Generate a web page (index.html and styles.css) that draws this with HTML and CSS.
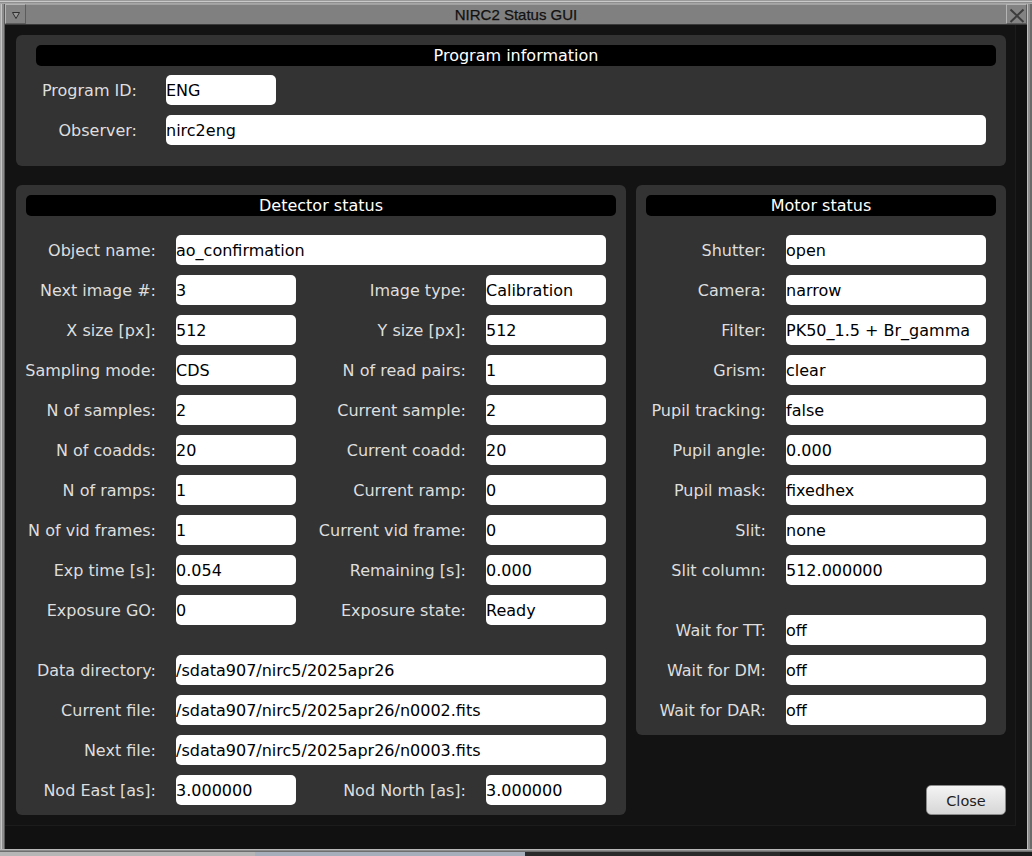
FILE: index.html
```html
<!DOCTYPE html>
<html>
<head>
<meta charset="utf-8">
<title>NIRC2 Status GUI</title>
<link rel="stylesheet" href="styles.css">
</head>
<body>
<div class="window">
  <div class="edge-top"></div>
  <div class="mid">
    <div class="side side-left"></div>
    <div class="main">
      <div class="titlebar">
        <div class="tb-btn">
          <svg width="21" height="21" viewBox="0 0 21 21"><polygon points="7.5,8.5 14.5,8.5 11,14.5" fill="#9a9a9a" stroke="#2e2e2e" stroke-width="1"/></svg>
        </div>
        <div class="title">NIRC2 Status GUI</div>
        <div class="tb-btn">
          <svg width="21" height="21" viewBox="0 0 21 21"><path d="M4.5 5.5 L17.5 18 M17.5 5.5 L4.5 18" stroke="#3c3c3c" stroke-width="2" fill="none"/></svg>
        </div>
      </div>
      <div class="client">
        <div class="app">
          <section class="panel program">
            <div class="panel-head">Program information</div>
            <div class="grid program-grid">
              <div class="lbl">Program ID:</div><div class="fld short">ENG</div>
              <div class="lbl">Observer:</div><div class="fld">nirc2eng</div>
            </div>
          </section>
          <div class="lower">
            <section class="panel detector">
              <div class="panel-head">Detector status</div>
              <div class="grid detector-grid">
                <div class="lbl">Object name:</div><div class="fld span-rest">ao_confirmation</div>
                <div class="lbl">Next image #:</div><div class="fld">3</div>
                <div class="lbl">Image type:</div><div class="fld">Calibration</div>
                <div class="lbl">X size [px]:</div><div class="fld">512</div>
                <div class="lbl">Y size [px]:</div><div class="fld">512</div>
                <div class="lbl">Sampling mode:</div><div class="fld">CDS</div>
                <div class="lbl">N of read pairs:</div><div class="fld">1</div>
                <div class="lbl">N of samples:</div><div class="fld">2</div>
                <div class="lbl">Current sample:</div><div class="fld">2</div>
                <div class="lbl">N of coadds:</div><div class="fld">20</div>
                <div class="lbl">Current coadd:</div><div class="fld">20</div>
                <div class="lbl">N of ramps:</div><div class="fld">1</div>
                <div class="lbl">Current ramp:</div><div class="fld">0</div>
                <div class="lbl">N of vid frames:</div><div class="fld">1</div>
                <div class="lbl">Current vid frame:</div><div class="fld">0</div>
                <div class="lbl">Exp time [s]:</div><div class="fld">0.054</div>
                <div class="lbl">Remaining [s]:</div><div class="fld">0.000</div>
                <div class="lbl">Exposure GO:</div><div class="fld">0</div>
                <div class="lbl">Exposure state:</div><div class="fld">Ready</div>
                <div class="spacer"></div>
                <div class="lbl">Data directory:</div><div class="fld span-rest">/sdata907/nirc5/2025apr26</div>
                <div class="lbl">Current file:</div><div class="fld span-rest">/sdata907/nirc5/2025apr26/n0002.fits</div>
                <div class="lbl">Next file:</div><div class="fld span-rest">/sdata907/nirc5/2025apr26/n0003.fits</div>
                <div class="lbl">Nod East [as]:</div><div class="fld">3.000000</div>
                <div class="lbl">Nod North [as]:</div><div class="fld">3.000000</div>
              </div>
            </section>
            <div class="right-col">
              <section class="panel motor">
                <div class="panel-head">Motor status</div>
                <div class="grid motor-grid">
                  <div class="lbl">Shutter:</div><div class="fld">open</div>
                  <div class="lbl">Camera:</div><div class="fld">narrow</div>
                  <div class="lbl">Filter:</div><div class="fld">PK50_1.5 + Br_gamma</div>
                  <div class="lbl">Grism:</div><div class="fld">clear</div>
                  <div class="lbl">Pupil tracking:</div><div class="fld">false</div>
                  <div class="lbl">Pupil angle:</div><div class="fld">0.000</div>
                  <div class="lbl">Pupil mask:</div><div class="fld">fixedhex</div>
                  <div class="lbl">Slit:</div><div class="fld">none</div>
                  <div class="lbl">Slit column:</div><div class="fld">512.000000</div>
                  <div class="spacer"></div>
                  <div class="lbl">Wait for TT:</div><div class="fld">off</div>
                  <div class="lbl">Wait for DM:</div><div class="fld">off</div>
                  <div class="lbl">Wait for DAR:</div><div class="fld">off</div>
                </div>
              </section>
              <button class="close-button">Close</button>
            </div>
          </div>
        </div>
      </div>
    </div>
    <div class="side side-right"></div>
  </div>
  <div class="edge-bottom"></div>
  <div class="desk">
    <div class="desk-a"></div>
    <div class="desk-b"></div>
    <div class="desk-c"></div>
    <div class="desk-d"></div>
  </div>
</div>
</body>
</html>
```

FILE: styles.css
```css
* {
  box-sizing: border-box;
}

html, body {
  margin: 0;
  padding: 0;
  background: #111111;
}

body {
  font-family: "DejaVu Sans", "Noto Sans", sans-serif;
  font-size: 16px;
}

.window {
  width: 1032px;
  height: 856px;
  display: flex;
  flex-direction: column;
  background: #8c8c8c;
  overflow: hidden;
}

.edge-top {
  height: 4px;
  background: #8e8e8e;
  border-top: 1px solid #9a9a9a;
  box-shadow: inset 0 1px 0 #c9c9c9, inset 0 -1px 0 #a6a6a6;
}

.mid {
  flex: 1;
  display: flex;
  min-height: 0;
}

.side {
  width: 5px;
  background: #8c8c8c;
}

.side-left {
  box-shadow: inset 1px 0 0 #a8a8a8, inset 2px 0 0 #c6c6c6, inset -1px 0 0 #5a5a5a;
}

.side-right {
  box-shadow: inset 1px 0 0 #bdbdbd, inset -2px 0 0 #6a6a6a;
}

.main {
  flex: 1;
  display: flex;
  flex-direction: column;
  min-width: 0;
}

.titlebar {
  height: 21px;
  display: flex;
  background: #808080;
  border-bottom: 1px solid #3a3a3a;
}

.tb-btn {
  width: 21px;
  height: 20px;
  background: #838383;
  border-top: 1px solid #b4b4b4;
  border-left: 1px solid #b4b4b4;
  border-right: 1px solid #5c5c5c;
  border-bottom: 1px solid #5c5c5c;
  display: flex;
  align-items: center;
  justify-content: center;
}

.tb-btn svg {
  display: block;
  margin: -1px;
}

.title {
  flex: 1;
  text-align: center;
  font-family: "Liberation Sans", Arial, sans-serif;
  font-size: 15px;
  line-height: 20px;
  color: #111111;
  border-top: 1px solid #a0a0a0;
  -webkit-text-stroke: 0.25px #111111;
}

.client {
  flex: 1;
  background: #111111;
  display: flex;
  flex-direction: column;
  align-items: flex-start;
}

.app {
  width: 1011px;
  height: 801px;
  background: #131313;
  border-right: 1px solid #1c1c1c;
  border-bottom: 1px solid #1c1c1c;
  padding: 10px 10px 0 11px;
  display: flex;
  flex-direction: column;
  gap: 19px;
}

.panel {
  background: #333333;
  border-radius: 6px;
}

.panel-head {
  height: 21px;
  background: #000000;
  color: #ffffff;
  border-radius: 5px;
  text-align: center;
  font-size: 16px;
  line-height: 22px;
}

.program {
  width: 990px;
  padding: 10px 10px 21px 20px;
}

.program .panel-head {
  margin-bottom: 9px;
}

.lower {
  display: flex;
  gap: 10px;
}

.detector {
  width: 610px;
  padding: 10px 20px 10px 10px;
}

.detector .panel-head,
.motor .panel-head {
  margin-bottom: 19px;
  margin-right: -10px;
}

.right-col {
  width: 370px;
  display: flex;
  flex-direction: column;
}

.motor {
  padding: 10px 20px 10px 10px;
}

.grid {
  display: grid;
  grid-auto-rows: 30px;
  row-gap: 10px;
}

.program-grid {
  grid-template-columns: 130px 1fr;
  padding-right: 10px;
}

.program-grid .lbl {
  padding-right: 29px;
}

.fld.short {
  width: 110px;
}

.detector-grid {
  grid-template-columns: 150px 120px 190px 120px;
  grid-template-rows: repeat(10, 30px) 10px;
}

.motor-grid {
  grid-template-columns: 140px 200px;
  grid-template-rows: repeat(9, 30px) 10px;
}

.lbl {
  color: #dedede;
  font-size: 16px;
  line-height: 31px;
  white-space: nowrap;
  padding-right: 20px;
  display: flex;
  justify-content: flex-end;
}

.fld {
  background: #ffffff;
  color: #000000;
  border-radius: 5px;
  font-size: 16px;
  line-height: 31px;
  height: 30px;
  white-space: nowrap;
  overflow: hidden;
}

.span-rest {
  grid-column: 2 / -1;
}

.spacer {
  grid-column: 1 / -1;
  height: 10px;
}

.close-button {
  margin-top: auto;
  align-self: flex-end;
  width: 80px;
  height: 30px;
  border: 1px solid #8a8a8a;
  border-radius: 5px;
  background: linear-gradient(#f4f4f4, #d6d6d6);
  color: #1e1e1e;
  font-family: "DejaVu Sans", sans-serif;
  font-size: 14.5px;
  line-height: 30px;
  padding: 0;
}

.edge-bottom {
  height: 3px;
  background: #8c8c8c;
  box-shadow: inset 0 1px 0 #b8b8b8, inset 0 -1px 0 #6e6e6e;
}

.desk {
  height: 4px;
  display: flex;
}

.desk-a {
  width: 255px;
  background: #b6b6b6;
}

.desk-b {
  width: 270px;
  background: #a6aebc;
}

.desk-c {
  width: 255px;
  background: #2a2a2a;
}

.desk-d {
  flex: 1;
  background: #1a1a1a;
}
```
